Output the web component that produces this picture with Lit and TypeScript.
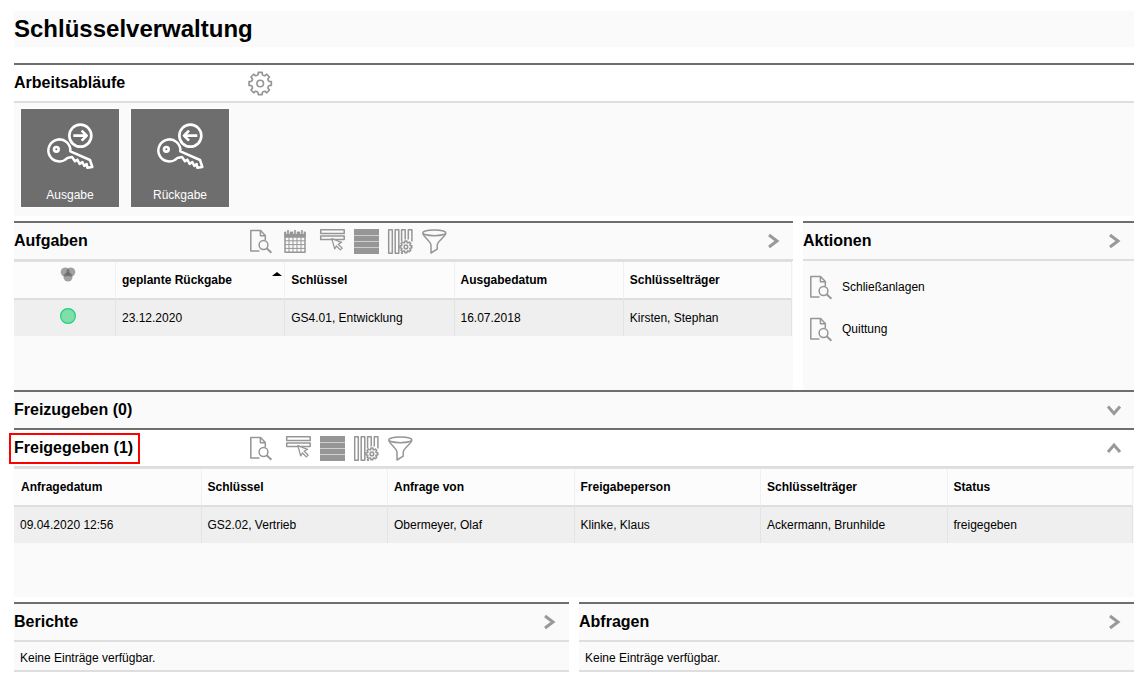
import { LitElement, html, css, svg, nothing } from "lit";
import { customElement, property } from "lit/decorators.js";

/** Outline of a cog wheel with eight rounded teeth. */
function cog(cx: number, cy: number, outer: number, inner: number): string {
  const at = (r: number, deg: number) => {
    const a = ((deg - 90) * Math.PI) / 180;
    return `${(cx + r * Math.cos(a)).toFixed(2)} ${(cy + r * Math.sin(a)).toFixed(2)}`;
  };
  let d = "";
  for (let i = 0; i < 8; i++) {
    const c = i * 45;
    d += `${i ? "L" : "M"}${at(outer, c - 10)}L${at(outer, c + 10)}L${at(inner + 0.3, c + 13)}`;
    d += `Q${at(inner - 1, c + 22.5)} ${at(inner + 0.3, c + 32)}`;
  }
  return d + "Z";
}

const icons: Record<string, unknown> = {
  gear: svg`<path d=${cog(12.2, 13.5, 11.3, 9)} stroke-width="1.7" /><circle cx="12.2" cy="13.5" r="3.3" stroke-width="1.6" />`,
  document: svg`<path d="M11.5 23H2.8V2.6H12.6L17.3 7.4V12.2M12.4 2.8V7.8H17.2" />
    <circle cx="15.5" cy="17" r="4.4" /><path d="M18.7 20.2L23.4 24.8" stroke-width="1.9" />`,
  calendar: svg`<path d="M3 4.4H23V24.3H3Z" />
    <path d="M3 4.4H23V9H3Z" fill="currentColor" />
    <path d="M3 12.8H23M3 16.6H23M3 20.4H23M7 9V24M11 9V24M15 9V24M19 9V24" stroke-width="1" />
    <path d="M6 2V6M13 2V6M20 2V6" class="halo" stroke-width="3.4" />
    <path d="M6 2V6M13 2V6M20 2V6" stroke-width="1.6" />`,
  select: svg`<path d="M4.7 1.7H28.2V5.4H4.7ZM4.7 7.9H28.2V11.6H4.7Z" />
    <path d="M15.8 10.6L25.6 14.3L22.2 16.2L26.2 20.1L24.3 21.9L20.4 18L18.7 20.9Z" class="cut" stroke-width="1.3" />`,
  rows: svg`<path d="M4 1H29V7H4ZM4 8H29V13H4ZM4 14H29V19H4ZM4 20H29V26H4Z" fill="currentColor" stroke="none" />
    <path d="M4 1H29V26H4Z" fill="currentColor" fill-opacity=".45" stroke="none" />`,
  columns: svg`<path d="M4.7 1.7H8.3V25.2H4.7ZM11.2 1.7H14.8V25.2H11.2ZM21.2 11.4V1.7H17.6V13.4M27.9 13.4V1.7H24.3V11.6M17.6 24V25.2H19" />
    <path d=${cog(21.9, 18.9, 6, 4.7)} class="cut" /><circle cx="21.9" cy="18.9" r="1.8" />`,
  funnel: svg`<ellipse cx="16.3" cy="4.8" rx="11.5" ry="2.9" />
    <path d="M4.8 5.2C5 8.5 13 13.5 13 17.2V25L19.2 21.2V17.2C19.2 13.5 27.6 8.5 27.8 5.2" />`,
};

@customElement("ui-icon")
export class UiIcon extends LitElement {
  @property() name = "document";

  static styles = css`
    :host { display: block; flex: none; color: #969696; }
    .icon {
      display: block; width: 28px; height: 26px; overflow: visible;
      fill: none; stroke: currentColor; stroke-width: 1.5; stroke-linejoin: round;
    }
    .cut { fill: #fafafa; }
    .halo { stroke: #fafafa; }
  `;

  render() {
    return html`<svg class="icon" viewBox="0 0 28 26" aria-hidden="true">${icons[this.name]}</svg>`;
  }
}

const chevrons: Record<string, string> = {
  right: "M4 2L12 8L4 14",
  down: "M2 4.5L8 11.5L14 4.5",
  up: "M2 12L8 5L14 12",
};

@customElement("ui-panel")
export class UiPanel extends LitElement {
  @property() heading = "";
  @property() chevron = "";
  @property({ type: Array }) tools: [string, string][] = [];
  @property({ type: Boolean }) plain = false;
  @property({ type: Boolean }) marked = false;
  @property({ type: Boolean }) collapsed = false;

  static styles = css`
    :host { display: block; min-width: 0; background: #fafafa; border-top: 2px solid #6e6e6e; }
    .head { display: flex; align-items: center; height: 36px; padding-right: 12px; }
    .head.open { border-bottom: 2px solid #dedede; }
    .head.plain { background: #fff; }
    .title { flex: none; width: 234px; margin: 0; font-size: 16px; line-height: 20px; font-weight: bold; }
    .mark { position: relative; display: inline-block; }
    .mark::after { content: ""; position: absolute; inset: -5px -7px -6px -5px; border: 2px solid #f00; }
    .tools { display: flex; gap: 6px; flex: 1; }
    button { display: block; padding: 0; border: 0; background: none; cursor: pointer; }
    .chevron { display: block; width: 16px; height: 16px; fill: none; stroke: #999; stroke-width: 3; }
  `;

  render() {
    return html`
      <div class="head ${this.plain ? "plain" : ""} ${this.collapsed ? "" : "open"}">
        <h2 class="title"><span class=${this.marked ? "mark" : ""}>${this.heading}</span></h2>
        <div class="tools">
          ${this.tools.map(([name, label]) => html`
            <button type="button" aria-label=${label}><ui-icon name=${name}></ui-icon></button>`)}
        </div>
        ${this.chevron ? html`
          <button type="button" aria-label=${this.heading}>
            <svg class="chevron" viewBox="0 0 16 16"><path d=${chevrons[this.chevron]} /></svg>
          </button>` : nothing}
      </div>
      <slot></slot>`;
  }
}

const listTools: [string, string][] = [
  ["select", "Auswählen"],
  ["rows", "Zeilen"],
  ["columns", "Spalten"],
  ["funnel", "Filter"],
];
const taskTools: [string, string][] = [["document", "Anzeigen"], ["calendar", "Kalender"], ...listTools];
const releasedTools: [string, string][] = [["document", "Anzeigen"], ...listTools];

const arrows = {
  out: "M157 80H196M182 65L197 80L182 95",
  back: "M199 80H160M174 65L159 80L174 95",
};

@customElement("app-root")
export class AppRoot extends LitElement {
  static styles = css`
    :host {
      display: block; padding: 11px 14px 9px; background: #fff; color: #000;
      font: 12px/16px "Liberation Sans", Arial, sans-serif;
    }
    .page-title { margin: 0 0 16px; font-size: 24px; line-height: 36px; font-weight: bold; background: #fafafa; }
    .tiles { display: flex; gap: 12px; padding: 6px 7px 9px; }
    .tile {
      display: block; width: 98px; height: 98px; padding: 0; border: 0; background: #6e6e6e; color: #fff;
      font: inherit; text-align: center; box-shadow: 0 0 0 1px #fff; cursor: pointer;
    }
    .tile-icon { display: block; width: 98px; height: 78px; fill: none; stroke: #fff; stroke-width: 8; stroke-linejoin: round; }
    .tile-label { display: block; padding-bottom: 4px; }
    .split { display: grid; gap: 10px; }
    .work { grid-template-columns: 779fr 331fr; margin-top: 5px; min-height: 169px; }
    .half { grid-template-columns: 1fr 1fr; margin-top: 5px; }
    .list { padding-right: 1px; }
    .released { min-height: 129px; }
    table { width: 100%; table-layout: fixed; border-spacing: 0; border-top: 1px solid #e2e2e2; }
    th, td { box-sizing: border-box; padding: 0 6px; border-left: 1px solid #f0f0f0; text-align: left; white-space: nowrap; }
    th { height: 38px; border-bottom: 2px solid #dedede; background: #fcfcfc; }
    td { height: 36px; border-color: #e3e3e3; background: #efefef; }
    th:first-child, td:first-child { border-left: 0; }
    .released th:first-child { padding-left: 7px; }
    th:last-child { border-right: 1px solid #f0f0f0; }
    td:last-child { border-right: 1px solid #e3e3e3; }
    th.state, td.state { width: 101px; padding: 5px 0 0 7px; vertical-align: top; }
    td.state { padding-top: 8px; }
    .symbol { display: block; width: 16px; height: 16px; margin: 0 auto; }
    th.sorted { padding-right: 2px; }
    .sort { display: flex; justify-content: space-between; }
    .sort-arrow { width: 10px; height: 4px; }
    .actions { margin: 0; padding: 5px; list-style: none; }
    .action { display: flex; align-items: center; gap: 6px; height: 42px; color: inherit; text-decoration: none; }
    .empty { margin: 0; padding: 8px 6px 4px; border-bottom: 2px solid #dedede; }
  `;

  private tile(label: string, arrow: string) {
    return html`
      <button type="button" class="tile">
        <svg class="tile-icon" viewBox="0 0 294 234" aria-hidden="true">
          <circle cx="178" cy="80" r="33" />
          <path d=${arrow} />
          <circle cx="106" cy="121" r="7" />
          <path d="M148 127A33 33 0 1 0 139 147L153 144L162 157L169 152L176 165L184 159L190 171L197 165L199 176L214 174L207 153Z" stroke-width="7.5" />
        </svg>
        <span class="tile-label">${label}</span>
      </button>`;
  }

  render() {
    return html`
      <h1 class="page-title">Schlüsselverwaltung</h1>

      <ui-panel heading="Arbeitsabläufe" plain .tools=${[["gear", "Einstellungen"]]}>
        <div class="tiles">
          ${this.tile("Ausgabe", arrows.out)}
          ${this.tile("Rückgabe", arrows.back)}
        </div>
      </ui-panel>

      <div class="split work">
        <ui-panel heading="Aufgaben" chevron="right" .tools=${taskTools}>
          <div class="list">
            <table>
              <thead>
                <tr>
                  <th class="state" scope="col" aria-label="Ampel">
                    <svg class="symbol" viewBox="0 0 16 16" fill="#555" fill-opacity=".55">
                      <circle cx="5.2" cy="5" r="4.5" /><circle cx="10.8" cy="5" r="4.5" /><circle cx="8" cy="10" r="4.5" />
                    </svg>
                  </th>
                  <th class="sorted" scope="col" aria-sort="ascending">
                    <div class="sort">
                      <span>geplante Rückgabe</span>
                      <svg class="sort-arrow" viewBox="0 0 10 4"><path d="M0 4L5 0L10 4Z" /></svg>
                    </div>
                  </th>
                  <th scope="col">Schlüssel</th>
                  <th scope="col">Ausgabedatum</th>
                  <th scope="col">Schlüsselträger</th>
                </tr>
              </thead>
              <tbody>
                <tr>
                  <td class="state">
                    <svg class="symbol" viewBox="0 0 16 16" role="img" aria-label="grün">
                      <circle cx="8" cy="8" r="7.4" fill="#80dfa8" stroke="#1fd07a" stroke-width="1.2" />
                    </svg>
                  </td>
                  <td>23.12.2020</td>
                  <td>GS4.01, Entwicklung</td>
                  <td>16.07.2018</td>
                  <td>Kirsten, Stephan</td>
                </tr>
              </tbody>
            </table>
          </div>
        </ui-panel>

        <ui-panel heading="Aktionen" chevron="right">
          <ul class="actions">
            ${["Schließanlagen", "Quittung"].map((label) => html`
              <li><a class="action" href="#"><ui-icon name="document"></ui-icon>${label}</a></li>`)}
          </ul>
        </ui-panel>
      </div>

      <ui-panel heading="Freizugeben (0)" chevron="down" collapsed></ui-panel>

      <ui-panel heading="Freigegeben (1)" chevron="up" plain marked .tools=${releasedTools}>
        <div class="list released">
          <table>
            <thead>
              <tr>
                ${["Anfragedatum", "Schlüssel", "Anfrage von", "Freigabeperson", "Schlüsselträger", "Status"].map(
                  (label) => html`<th scope="col">${label}</th>`)}
              </tr>
            </thead>
            <tbody>
              <tr>
                ${["09.04.2020 12:56", "GS2.02, Vertrieb", "Obermeyer, Olaf", "Klinke, Klaus", "Ackermann, Brunhilde", "freigegeben"].map(
                  (value) => html`<td>${value}</td>`)}
              </tr>
            </tbody>
          </table>
        </div>
      </ui-panel>

      <div class="split half">
        ${["Berichte", "Abfragen"].map((heading) => html`
          <ui-panel heading=${heading} chevron="right"><p class="empty">Keine Einträge verfügbar.</p></ui-panel>`)}
      </div>`;
  }
}
